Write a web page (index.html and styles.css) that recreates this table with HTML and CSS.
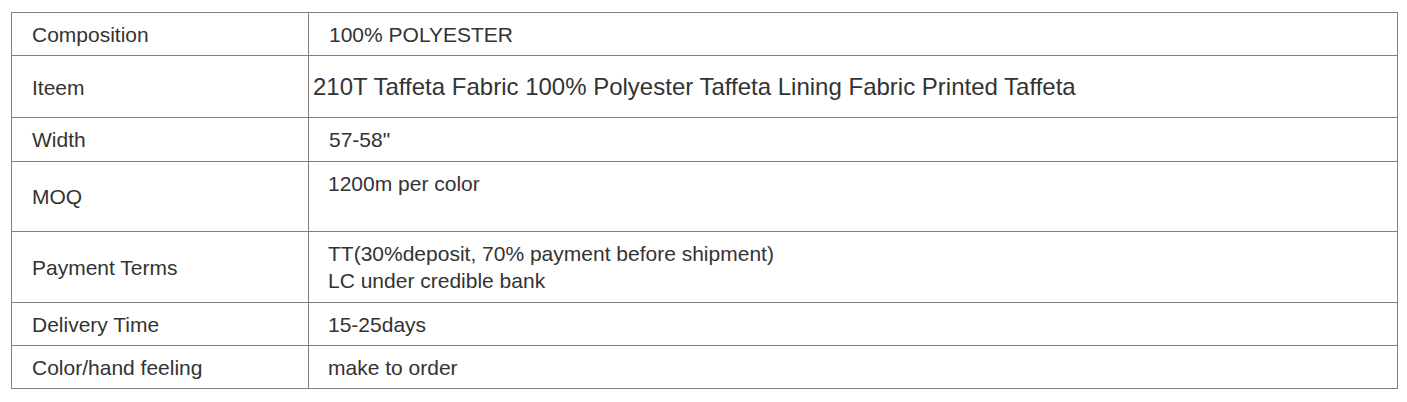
FILE: index.html
```html
<!DOCTYPE html>
<html>
<head>
<meta charset="utf-8">
<link rel="stylesheet" href="styles.css">
</head>
<body>
<div class="wrap">
<table class="spec">
  <tbody>
    <tr><td class="label">Composition</td><td class="value value--indent">100% POLYESTER</td></tr>
    <tr><td class="label">Iteem</td><td class="value value--big"><span class="big">210T Taffeta Fabric 100% Polyester Taffeta Lining Fabric Printed Taffeta</span></td></tr>
    <tr><td class="label">Width</td><td class="value value--indent">57-58"</td></tr>
    <tr><td class="label">MOQ</td><td class="value value--top">1200m per color<br>&nbsp;</td></tr>
    <tr><td class="label">Payment Terms</td><td class="value">TT(30%deposit, 70% payment before shipment)<br>LC under credible bank</td></tr>
    <tr><td class="label">Delivery Time</td><td class="value">15-25days</td></tr>
    <tr><td class="label">Color/hand feeling</td><td class="value">make to order</td></tr>
  </tbody>
</table>
</div>
</body>
</html>
```
FILE: styles.css
```css
html, body {
  margin: 0;
  padding: 0;
  background: #fff;
}
.wrap {
  padding: 12px 0 0 11px;
}
.spec {
  border-collapse: collapse;
  width: 1387px;
  font-family: "Liberation Sans", Arial, sans-serif;
  font-size: 21px;
  line-height: 27.3px;
  color: #333;
}
.spec td {
  border: 1px solid #808080;
  padding: 8px 20px 7px 19px;
  vertical-align: middle;
  text-align: left;
}
.spec .label {
  width: 256px;
  padding-left: 20px;
}
.spec .value--indent {
  padding-left: 20px;
}
.spec .value--big {
  padding-left: 4px;
}
.spec .big {
  font-size: 24px;
  line-height: 46px;
}
.spec .value--top {
  vertical-align: top;
}
```
